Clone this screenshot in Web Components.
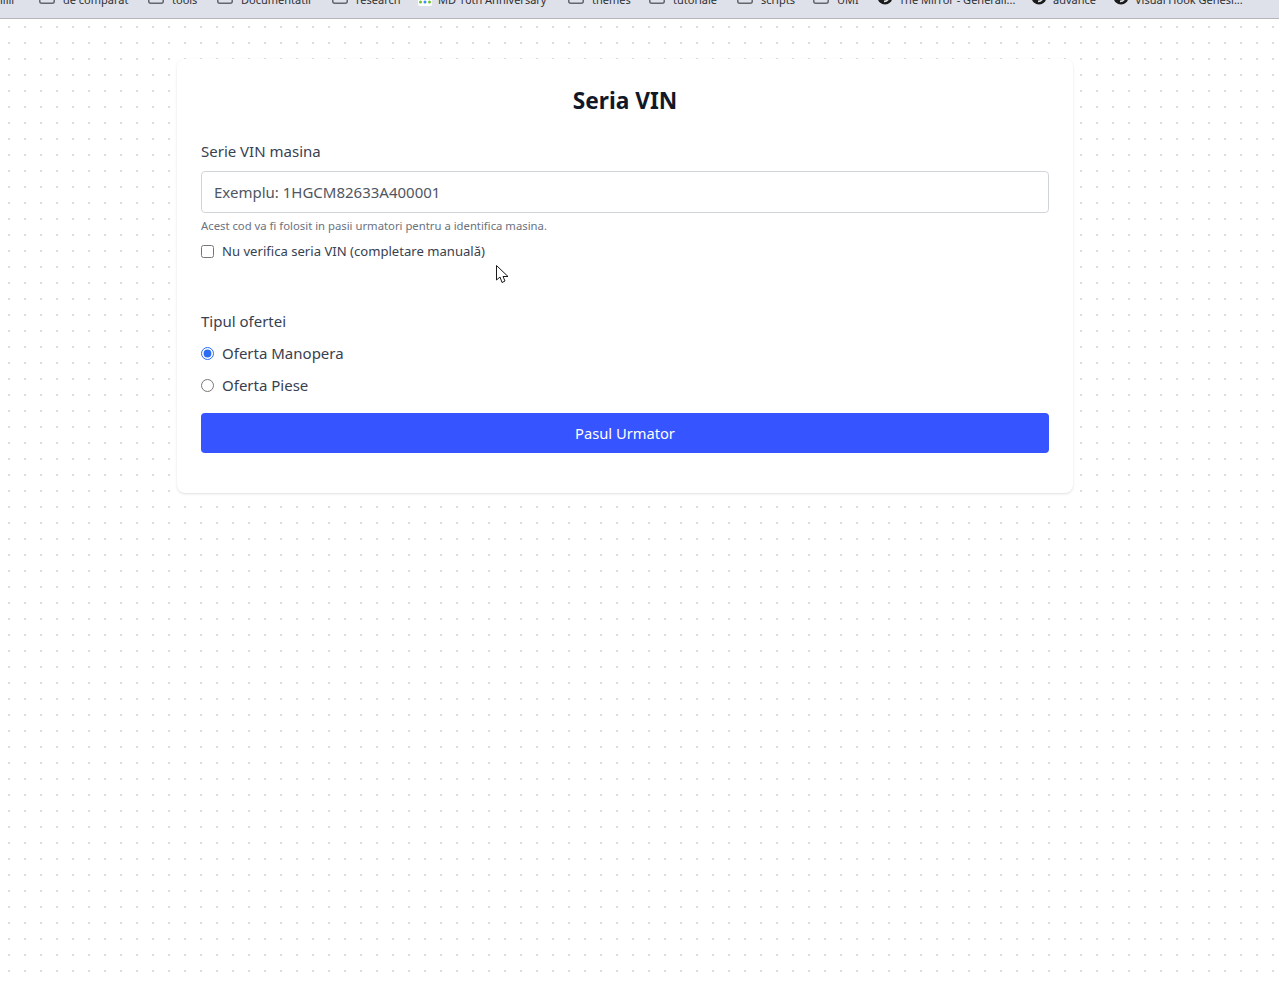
<!DOCTYPE html>
<html>
<head>
<meta charset="utf-8">
<title>Seria VIN</title>
<style>
  html, body { margin: 0; height: 100%; }
  body { font-family: "Noto Sans", sans-serif; background: #fff; }
</style>
</head>
<body>
<bookmarks-bar>
  <bookmark-item icon="none" width="20">iliii</bookmark-item>
  <bookmark-item width="66">de comparat</bookmark-item>
  <bookmark-item width="26">tools</bookmark-item>
  <bookmark-item width="72">Documentatii</bookmark-item>
  <bookmark-item width="42">research</bookmark-item>
  <bookmark-item icon="dots" width="111">MD 10th Anniversary</bookmark-item>
  <bookmark-item width="38">themes</bookmark-item>
  <bookmark-item width="45">tutoriale</bookmark-item>
  <bookmark-item width="33">scripts</bookmark-item>
  <bookmark-item width="21">UMI</bookmark-item>
  <bookmark-item icon="swirl" width="113">The Mirror - Generali...</bookmark-item>
  <bookmark-item icon="swirl" width="41">advance</bookmark-item>
  <bookmark-item icon="swirl" width="105">Visual Hook Genesi...</bookmark-item>
</bookmarks-bar>
<dotted-page>
  <vin-card>
    <h-title slot="title">Seria VIN</h-title>
    <vin-form></vin-form>
  </vin-card>
  <mouse-cursor></mouse-cursor>
</dotted-page>

<script>
class BookmarksBar extends HTMLElement {
  constructor() {
    super()
    this.attachShadow({ mode: 'open' })
    this.shadowRoot.innerHTML = `
      <style>
        :host {
          display: flex;
          height: 18px;
          background: #dee1e9;
          border-bottom: 1px solid #b4b6bc;
          overflow: hidden;
          gap: 19px;
        }
      </style>
      <slot></slot>
    `
  }
}

// the window is cut at the top, so only the lower part of each item shows
class BookmarkItem extends HTMLElement {
  constructor() {
    super()
    this.attachShadow({ mode: 'open' })
    const icon = this.getAttribute('icon')
    const textWidth = this.getAttribute('width') || 40
    let gap = 8
    let glyph = `<svg style="margin-bottom:4px" width="16" height="16" viewBox="0 0 16 16"><path d="M.75 0v13.250a2 2 0 0 0 2 2h10.500a2 2 0 0 0 2-2V0" fill="none" stroke="#63666b" stroke-width="1.500"/></svg>`
    if (icon === 'dots') {
      gap = 5
      glyph = `<svg style="margin-bottom:2px" width="16" height="16" viewBox="0 0 16 16"><rect x="1" y="-4" width="14" height="20" rx="2" fill="#fff"/><circle cx="3.500" cy="12" r="1.500" fill="#6bc62f"/><circle cx="8" cy="12" r="1.500" fill="#3a8fe8"/><circle cx="12.500" cy="12" r="1.500" fill="#6bc62f"/></svg>`
    }
    if (icon === 'swirl') {
      gap = 6
      glyph = `<svg style="margin-bottom:3px" width="16" height="16" viewBox="0 0 16 16"><circle cx="8" cy="8" r="7.500" fill="#1b1b1b"/><path d="M2 7.500c3 3 7 3.500 10 1.500-1 2.500-3 3.500-5 3.500" fill="none" stroke="#dee1e9" stroke-width="1.500"/></svg>`
    }
    if (icon === 'none') glyph = ''
    this.shadowRoot.innerHTML = `
      <style>
        :host {
          display: flex;
          flex: none;
          align-items: flex-end;
          gap: ${gap}px;
          height: 16px;
          margin-top: -8px;
          font: 11px/16px "Noto Sans", sans-serif;
          color: #2f3033;
        }
        .text { display: block; width: ${textWidth}px; white-space: nowrap; }
        svg { display: block; flex: none; }
      </style>
      ${glyph}<span class="text"><slot></slot></span>
    `
  }
}

class DottedPage extends HTMLElement {
  constructor() {
    super()
    this.attachShadow({ mode: 'open' })
    this.shadowRoot.innerHTML = `
      <style>
        :host {
          display: block;
          position: relative;
          height: 966px;
          box-sizing: border-box;
          padding: 40px 206px 0 177px;
          overflow: hidden;
          background-color: #fff;
          background-image: conic-gradient(from 0deg at 2px 2px, transparent 75%, #dcdcdc 75%);
          background-size: 16px 16px;
          background-position: 8px 7px;
        }
      </style>
      <slot></slot>
    `
  }
}

class VinCard extends HTMLElement {
  constructor() {
    super()
    this.attachShadow({ mode: 'open' })
    this.shadowRoot.innerHTML = `
      <style>
        :host {
          display: block;
          box-sizing: border-box;
          width: 896px;
          height: 434px;
          padding: 24px;
          background: #fff;
          border-radius: 8px;
          box-shadow: 0 1px 3px rgba(0,0,0,.1), 0 1px 2px -1px rgba(0,0,0,.1);
        }
      </style>
      <slot name="title"></slot>
      <slot></slot>
    `
  }
}

class HTitle extends HTMLElement {
  constructor() {
    super()
    this.attachShadow({ mode: 'open' })
    this.shadowRoot.innerHTML = `
      <style>
        :host {
          display: block;
          text-align: center;
          font-size: 22.700px;
          line-height: 32px;
          font-weight: 700;
          color: #111827;
          padding-top: 2px;
          margin-bottom: 22px;
        }
      </style>
      <slot></slot>
    `
  }
}

class VinForm extends HTMLElement {
  constructor() {
    super()
    this.attachShadow({ mode: 'open' })
    this.shadowRoot.innerHTML = `
      <style>
        :host { display: block; color: #374151; font-size: 15px; line-height: 24px; }
        label.head { display: block; margin-bottom: 8px; }
        input[type=text] {
          display: block;
          width: 100%;
          height: 42px;
          box-sizing: border-box;
          padding: 8px 12px;
          border: 1px solid #d1d5db;
          border-radius: 4px;
          font: inherit;
          color: #374151;
          background: #fff;
        }
        input[type=text]::placeholder { color: #4f5663; opacity: 1; }
        .hint { font-size: 11.300px; line-height: 16px; color: #6b7280; margin: 5px 0 0; }
        .check { display: flex; align-items: center; gap: 8px; font-size: 13.100px; line-height: 20px; margin-top: 7px; }
        .check input { margin: 0; width: 13px; height: 13px; }
        .offer { margin-top: 48px; }
        .radio { display: flex; align-items: center; gap: 8px; height: 24px; margin-top: 8px; }
        .radio input { margin: 0; width: 13px; height: 13px; accent-color: #2b6cf0; }
        button {
          display: block;
          width: 100%;
          height: 40px;
          margin-top: 16px;
          border: 0;
          border-radius: 4px;
          background: #3654ff;
          color: #fff;
          font: inherit;
          font-size: 14.700px;
        }
      </style>
      <label class="head" for="vin">Serie VIN masina</label>
      <input id="vin" type="text" placeholder="Exemplu: 1HGCM82633A400001">
      <p class="hint">Acest cod va fi folosit in pasii urmatori pentru a identifica masina.</p>
      <label class="check"><input type="checkbox">Nu verifica seria VIN (completare manuală)</label>
      <div class="offer">Tipul ofertei</div>
      <label class="radio"><input type="radio" name="offer" checked>Oferta Manopera</label>
      <label class="radio"><input type="radio" name="offer">Oferta Piese</label>
      <button type="button">Pasul Urmator</button>
    `
  }
}

class MouseCursor extends HTMLElement {
  constructor() {
    super()
    this.attachShadow({ mode: 'open' })
    this.shadowRoot.innerHTML = `
      <style>
        :host { position: absolute; left: 495px; top: 245px; display: block; width: 14px; height: 20px; }
        svg { display: block; }
      </style>
      <svg width="14" height="20" viewBox="0 0 14 20"><path d="M1.500 1.500V16L5 13l2 5.500 3-1.500-2-4.500h5z" fill="#fff" stroke="#1a1a1a" stroke-width="1"/></svg>
    `
  }
}

window.customElements.define('bookmarks-bar', BookmarksBar)
window.customElements.define('bookmark-item', BookmarkItem)
window.customElements.define('dotted-page', DottedPage)
window.customElements.define('vin-card', VinCard)
window.customElements.define('h-title', HTitle)
window.customElements.define('vin-form', VinForm)
window.customElements.define('mouse-cursor', MouseCursor)
</script>
</body>
</html>
